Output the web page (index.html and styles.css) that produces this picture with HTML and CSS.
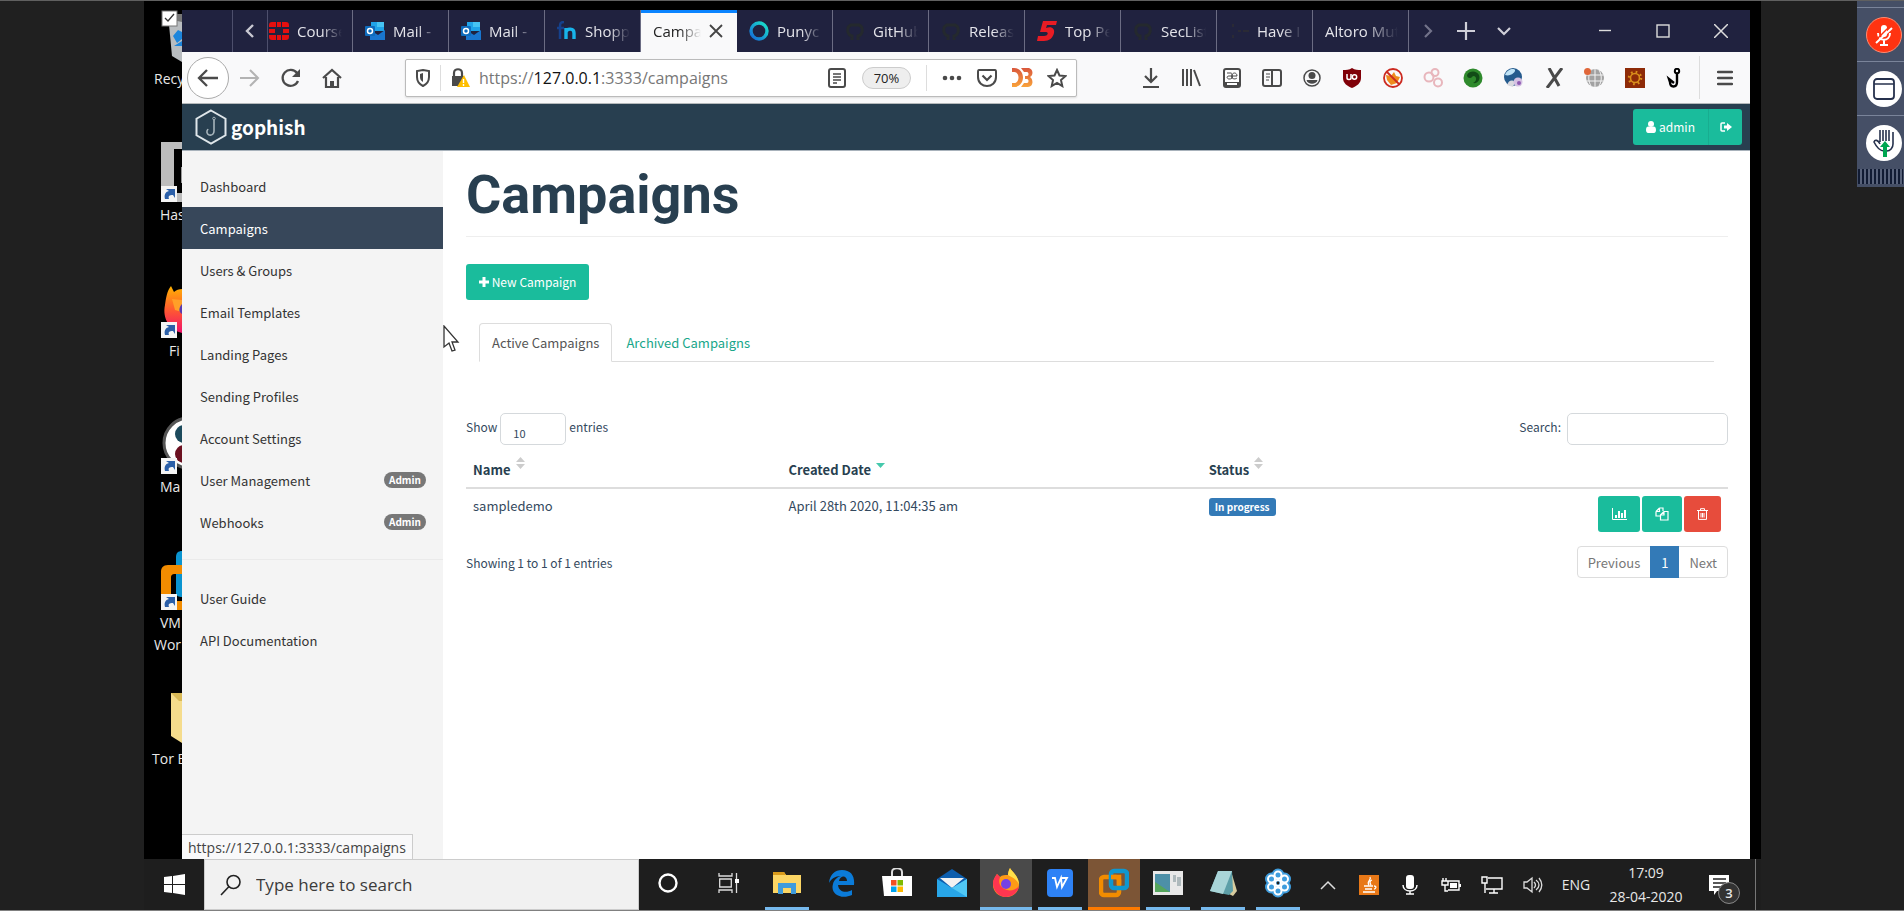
FILE: index.html
```html
<!DOCTYPE html>
<html lang="en">
<head>
<meta charset="utf-8">
<title>Campaigns - Gophish</title>
<link rel="stylesheet" href="styles.css">
</head>
<body>
<div class="viewer">
<div class="screen">
  <div class="workspace">
    <ul class="desktop">
      <li class="shortcut"><svg width="38" height="52" viewBox="0 0 38 52"><path d="M24 4h14v48l-10-6z" fill="#b9bdc0"/><path d="M24 4h14v8l-14-3z" fill="#777"/><path d="M29 26l5-6 4 2v7l-5 4zM30 36h8v-5z" fill="#1d86dc"/><rect x="18" y="1" width="15" height="15" fill="#fff" stroke="#777"/><path d="M21 8l3 3 6-7" fill="none" stroke="#333" stroke-width="1.3"/></svg><span class="label label-a">Recy</span></li>
      <li class="shortcut"><svg width="38" height="60" viewBox="0 0 38 60"><path d="M17 0h21v7h-8v44h8v9H17z" fill="#bdbdbd"/><path d="M38 25v16" stroke="#999" stroke-width="2"/><rect x="17" y="44" width="16" height="16" fill="#f4f4f4"/><path d="M21 57c-1-4 0-7 4-8l-3-2h9v9l-2-3c-4 0-5 1-4 4z" fill="#2b5fa8"/></svg><span class="label label-b">Has</span></li>
      <li class="shortcut"><svg width="38" height="60" viewBox="0 0 38 60"><defs><linearGradient id="fxd" x2="0" y2="1"><stop stop-color="#ffb400"/><stop offset=".5" stop-color="#ff5b30"/><stop offset="1" stop-color="#f0106c"/></linearGradient></defs><path d="M27 8l3 6c2-2 5-3 8-3v44c-12-3-20-14-17-28 1-7 2-14 6-19z" fill="url(#fxd)"/><path d="M28 21l10 1v12l-7-2z" fill="#ffa028"/><path d="M38 26v10c-4-2-3-7 0-10z" fill="#5a3bb0"/><rect x="17" y="44" width="16" height="16" fill="#f4f4f4"/><path d="M21 57c-1-4 0-7 4-8l-3-2h9v9l-2-3c-4 0-5 1-4 4z" fill="#2b5fa8"/></svg><span class="label label-c">Fi</span></li>
      <li class="shortcut"><svg width="38" height="60" viewBox="0 0 38 60"><circle cx="45" cy="29" r="25" fill="#fff" stroke="#555" stroke-width="3"/><circle cx="40" cy="20" r="9" fill="#1c4a5c"/><circle cx="40" cy="40" r="9" fill="#6b1020"/><rect x="17" y="44" width="16" height="16" fill="#f4f4f4"/><path d="M21 57c-1-4 0-7 4-8l-3-2h9v9l-2-3c-4 0-5 1-4 4z" fill="#2b5fa8"/></svg><span class="label label-b">Ma</span></li>
      <li class="shortcut"><svg width="38" height="60" viewBox="0 0 38 60"><path d="M38 1c-4 0-6 2-6 6v36c0 3 3 4 6 4z" fill="#0a94d0"/><path d="M38 15H24c-5 0-7 3-7 7v38h21v-9H27V28c0-3 1-4 4-4h7z" fill="#f28c00"/><rect x="17" y="44" width="16" height="16" fill="#f4f4f4"/><path d="M21 57c-1-4 0-7 4-8l-3-2h9v9l-2-3c-4 0-5 1-4 4z" fill="#2b5fa8"/></svg><span class="label label-b">VM</span><span class="label label-a">Wor</span></li>
      <li class="shortcut"><svg width="38" height="60" viewBox="0 0 38 60"><path d="M27 7h11v50l-11-7z" fill="#f5dc8c"/><path d="M27 7h11v8h-3z" fill="#d9b956"/></svg><span class="label label-d">Tor B</span></li>
    </ul>

    <div class="browser">
      <div class="tabs">
        <span class="tab-lead"></span>
        <button class="tab-scroll" aria-label="Previous tabs"><svg width="10" height="16" viewBox="0 0 10 16"><path d="M8 2L2 8l6 6" fill="none" stroke="#c9c9d2" stroke-width="2.4"/></svg></button>
        <button class="tab tab-cut"><svg width="20" height="20" viewBox="0 0 20 20"><path d="M3 1h4v5H0V4c0-2 1-3 3-3zM8 1h4v5H8zM13 1h4c2 0 3 1 3 3v2h-7zM0 8h6v4H0zM14 8h6v4h-6zM0 14h7v5H3c-2 0-3-1-3-3zM8 14h4v5H8zM13 14h7v2c0 2-1 3-3 3h-4z" fill="#e60f0f"/></svg><span>Course</span></button>
        <button class="tab"><svg width="20" height="20" viewBox="0 0 20 20"><path d="M6 1h13v9H6z" fill="#1fa3e8"/><path d="M12 1h7v5h-7z" fill="#46c3f2"/><path d="M5 9l8 5 7-5v10H5z" fill="#1976cf"/><rect y="5" width="10" height="10" rx="1" fill="#0f6cbd"/><circle cx="5" cy="10" r="2.5" fill="none" stroke="#fff" stroke-width="1.5"/></svg><span>Mail -</span></button>
        <button class="tab"><svg width="20" height="20" viewBox="0 0 20 20"><path d="M6 1h13v9H6z" fill="#1fa3e8"/><path d="M12 1h7v5h-7z" fill="#46c3f2"/><path d="M5 9l8 5 7-5v10H5z" fill="#1976cf"/><rect y="5" width="10" height="10" rx="1" fill="#0f6cbd"/><circle cx="5" cy="10" r="2.5" fill="none" stroke="#fff" stroke-width="1.5"/></svg><span>Mail -</span></button>
        <button class="tab"><svg width="20" height="20" viewBox="0 0 20 20"><path d="M7 1C3 1 3 3 3 6v12M0 7h7" fill="none" stroke="#15418c" stroke-width="2.5"/><path d="M9 18V7M9 11c1-4 8-4 8 1v6" fill="none" stroke="#18b4ea" stroke-width="3.4"/></svg><span>Shopp</span></button>
        <button class="tab tab-active"><span>Campa</span><svg width="14" height="14" viewBox="0 0 14 14"><path d="M1 1l12 12M13 1L1 13" stroke="#444" stroke-width="1.8"/></svg></button>
        <button class="tab"><svg width="20" height="20" viewBox="0 0 20 20"><defs><linearGradient id="ring" x1="1" x2="0" y2="1"><stop stop-color="#19e6c8"/><stop offset="1" stop-color="#1568d8"/></linearGradient></defs><circle cx="10" cy="10" r="8" fill="none" stroke="url(#ring)" stroke-width="3.4"/></svg><span>Punyc</span></button>
        <button class="tab"><svg width="20" height="20" viewBox="0 0 20 20"><path d="M7 19v-4c-5-1-6-9-1-11h8c5 2 4 10-1 11v4" fill="none" stroke="#24292e" stroke-width="3"/></svg><span>GitHub</span></button>
        <button class="tab"><svg width="20" height="20" viewBox="0 0 20 20"><path d="M7 19v-4c-5-1-6-9-1-11h8c5 2 4 10-1 11v4" fill="none" stroke="#24292e" stroke-width="3"/></svg><span>Releas</span></button>
        <button class="tab"><svg width="20" height="20" viewBox="0 0 20 20"><path d="M6 0h14l-1 4h-9l-1 3c6-2 9 1 8 5-1 5-5 8-10 8H0l1-5h6c4 0 5-4 2-4H3z" fill="#e81c24"/></svg><span>Top Pe</span></button>
        <button class="tab"><svg width="20" height="20" viewBox="0 0 20 20"><path d="M7 19v-4c-5-1-6-9-1-11h8c5 2 4 10-1 11v4" fill="none" stroke="#24292e" stroke-width="3"/></svg><span>SecList</span></button>
        <button class="tab"><svg width="20" height="20" viewBox="0 0 20 20"><path d="M4 3v3M4 14v3M9 10h3M14 10h6" stroke="#2a2a35" stroke-width="2"/></svg><span>Have I</span></button>
        <button class="tab"><span>Altoro Mut</span></button>
        <div class="tab-tools">
          <button aria-label="Next tabs"><svg width="10" height="16" viewBox="0 0 10 16"><path d="M2 2l6 6-6 6" fill="none" stroke="#72738a" stroke-width="2.2"/></svg></button>
          <button aria-label="New tab"><svg width="18" height="18" viewBox="0 0 18 18"><path d="M9 0v18M0 9h18" stroke="#cfcfd8" stroke-width="2.2"/></svg></button>
          <button aria-label="List all tabs"><svg width="16" height="10" viewBox="0 0 16 10"><path d="M2 2l6 6 6-6" fill="none" stroke="#cfcfd8" stroke-width="2.2"/></svg></button>
        </div>
        <div class="window-tools">
          <button aria-label="Minimize"><svg width="14" height="14" viewBox="0 0 14 14"><path d="M1 6.500h12" stroke="#ddd" stroke-width="1.4"/></svg></button>
          <button aria-label="Maximize"><svg width="14" height="14" viewBox="0 0 14 14"><rect x="1" y="1" width="12" height="12" fill="none" stroke="#ddd" stroke-width="1.4"/></svg></button>
          <button aria-label="Close"><svg width="14" height="14" viewBox="0 0 14 14"><path d="M0 0l14 14M14 0L0 14" stroke="#ddd" stroke-width="1.5"/></svg></button>
        </div>
      </div>

      <div class="toolbar">
        <div class="nav-tools">
          <button class="back" aria-label="Back"><svg width="22" height="20" viewBox="0 0 22 20"><path d="M21 10H2M10 2l-8 8 8 8" fill="none" stroke="#4a4a4a" stroke-width="2.3"/></svg></button>
          <button aria-label="Forward"><svg width="20" height="18" viewBox="0 0 20 18"><path d="M0 9h18M10 1l8 8-8 8" fill="none" stroke="#b3b3b3" stroke-width="2"/></svg></button>
          <button aria-label="Reload"><svg width="20" height="20" viewBox="0 0 20 20"><path d="M16 5a8 8 0 1 0 1 8" fill="none" stroke="#4a4a4a" stroke-width="2.3"/><path d="M19 1v8h-8z" fill="#4a4a4a"/></svg></button>
          <button aria-label="Home"><svg width="20" height="20" viewBox="0 0 20 20"><path d="M1 10l9-8 9 8M4 9v10h12V9" fill="none" stroke="#4a4a4a" stroke-width="2.2"/><path d="M8 19v-6h4v6z" fill="#4a4a4a"/></svg></button>
        </div>
        <div class="url-box">
          <svg class="shield" width="16" height="18" viewBox="0 0 16 18"><path d="M8 1l6 1v6c0 4-2 7-6 9-4-2-6-5-6-9V2z" fill="none" stroke="#4a4a4a" stroke-width="2"/><path d="M8 4v9c-2-1-3-3-3-5V5z" fill="#4a4a4a"/></svg>
          <span class="divider"></span>
          <svg class="lock" width="18" height="20" viewBox="0 0 18 20"><path d="M2 9V5c0-5 8-5 8 0v4" fill="none" stroke="#4a4a4a" stroke-width="2.2"/><path d="M0 8h12v10H0z" fill="#4a4a4a"/><path d="M12 7l6 12H5z" fill="#ffbf00"/><path d="M11.500 11v4M11.500 16v2" stroke="#fff" stroke-width="1.4"/></svg>
          <div class="url" role="textbox" aria-label="Address">https://<b>127.0.0.1</b>:3333/campaigns</div>
          <button aria-label="Reader view"><svg width="18" height="20" viewBox="0 0 18 20"><rect x="1" y="1" width="16" height="18" rx="2" fill="none" stroke="#4a4a4a" stroke-width="2"/><path d="M5 6h8M5 9h8M5 12h8M5 15h4" stroke="#4a4a4a" stroke-width="1.300"/></svg></button>
          <button class="zoom">70%</button>
          <div class="url-tools">
            <button aria-label="Page actions"><svg width="20" height="6" viewBox="0 0 20 6"><circle cx="3" cy="3" r="2.300" fill="#4a4a4a"/><circle cx="10" cy="3" r="2.300" fill="#4a4a4a"/><circle cx="17" cy="3" r="2.300" fill="#4a4a4a"/></svg></button>
            <button aria-label="Save to Pocket"><svg width="20" height="18" viewBox="0 0 20 18"><path d="M2 1h16c1 0 1 1 1 2v5c0 12-18 12-18 0V3c0-1 0-2 1-2z" fill="none" stroke="#4a4a4a" stroke-width="2"/><path d="M5.500 6.500L10 11l4.500-4.500" fill="none" stroke="#4a4a4a" stroke-width="2.200"/></svg></button>
            <button aria-label="D3"><svg width="21" height="19" viewBox="0 0 21 19"><defs><linearGradient id="dthree" x2="0" y2="1"><stop stop-color="#d9573c"/><stop offset="1" stop-color="#f9a33b"/></linearGradient></defs><path d="M0 0h2c12 0 12 19 0 19H0v-4h2c6 0 6-11 0-11H0zM9 0h7c5 0 6 7 2 9 4 3 3 10-2 10H9l3-4h3c2 0 2-4 0-4h-2V8h2c2 0 2-4 0-4h-3z" fill="url(#dthree)"/></svg></button>
            <button aria-label="Bookmark this page"><svg width="20" height="20" viewBox="0 0 20 20"><path d="M10 2l2.500 5.500 6 .6-4.500 4 1.300 6L10 15l-5.300 3.100 1.300-6-4.500-4 6-.6z" fill="none" stroke="#4a4a4a" stroke-width="2"/></svg></button>
          </div>
        </div>
        <div class="addons">
          <button aria-label="Downloads"><svg width="20" height="20" viewBox="0 0 20 20"><path d="M10 0v13M4 8l6 6 6-6M2 19h16" fill="none" stroke="#4a4a4a" stroke-width="2.200"/></svg></button>
          <button aria-label="Library"><svg width="20" height="20" viewBox="0 0 20 20"><path d="M2 1v17M6 1v17M10 1v17M13 2l6 16" stroke="#4a4a4a" stroke-width="2"/></svg></button>
          <button aria-label="Dictionary"><svg width="18" height="20" viewBox="0 0 18 20"><rect x="1" y="1" width="16" height="18" rx="2" fill="#fff" stroke="#4a4a4a" stroke-width="2"/><path d="M1 14h16v5H1z" fill="#4a4a4a"/><path d="M4 15h10v2H4z" fill="#fff"/><path d="M4 5h4c1 0 1 1 1 6M9 8H6c-3 0-2 3 0 3 3 0 3-1 3-3 0-4 5-4 5 0H9c0 4 4 3 5 2" fill="none" stroke="#4a4a4a"/></svg></button>
          <button aria-label="Sidebars"><svg width="20" height="18" viewBox="0 0 20 18"><rect x="1" y="1" width="18" height="16" rx="2" fill="none" stroke="#4a4a4a" stroke-width="2"/><path d="M10 1v16" stroke="#4a4a4a" stroke-width="2"/><path d="M4 5h4M4 8h4M4 11h3" stroke="#4a4a4a"/></svg></button>
          <button aria-label="Account"><svg width="18" height="18" viewBox="0 0 18 18"><circle cx="9" cy="9" r="8" fill="none" stroke="#4a4a4a" stroke-width="1.500"/><circle cx="9" cy="6.500" r="3.500" fill="#4a4a4a"/><path d="M3.500 11h11c-1 5-10 5-11 0z" fill="#4a4a4a"/></svg></button>
          <button aria-label="uBlock Origin"><svg width="18" height="20" viewBox="0 0 18 20"><path d="M9 0c3 2 6 2 9 2v8c0 5-4 8-9 10-5-2-9-5-9-10V2c3 0 6 0 9-2z" fill="#800008"/><path d="M4 6v4c0 2 4 2 4 0V6" fill="none" stroke="#fff" stroke-width="1.500"/><circle cx="11.500" cy="9" r="2.200" fill="none" stroke="#fff" stroke-width="1.500"/></svg></button>
          <button aria-label="FoxyProxy"><svg width="20" height="20" viewBox="0 0 20 20"><path d="M3 7l5 1 3-4 2 4 4 1-3 6-6 2-4-5z" fill="#ef8b1e"/><circle cx="10" cy="10" r="9" fill="none" stroke="#cc2a20" stroke-width="1.800"/><path d="M4 4l12 12" stroke="#cc2a20" stroke-width="1.800"/></svg></button>
          <button aria-label="Circles"><svg width="20" height="20" viewBox="0 0 20 20"><g fill="none" stroke="#e8b6bc" stroke-width="2"><circle cx="6" cy="9" r="4.500"/><circle cx="12" cy="4.500" r="3.500"/><circle cx="15" cy="14.500" r="4"/></g></svg></button>
          <button aria-label="Green globe"><svg width="20" height="20" viewBox="0 0 20 20"><circle cx="10" cy="10" r="9.500" fill="#2f8a2c"/><path d="M4 7c3-5 10-4 12 0 2 5-2 9-6 8 4-2 4-6 1-7-2 0-2 2-4 2s-3-1-3-3z" fill="#124c17"/></svg></button>
          <button aria-label="Globe"><svg width="20" height="20" viewBox="0 0 20 20"><circle cx="9" cy="9" r="9" fill="#255b8d"/><path d="M1 7c2-6 9-7 10-5s-5 7-10 5z" fill="#bfe2f5"/><path d="M3 17c2-6 6-5 8-3l-2 5z" fill="#d9d9df"/><circle cx="14" cy="14" r="4.500" fill="#d5c2e2"/><circle cx="15" cy="15" r="2" fill="#8f5bb3"/></svg></button>
          <button aria-label="XPath"><svg width="18" height="20" viewBox="0 0 18 20"><path d="M4 0l10 18M17 0L2 20" stroke="#4a4a4a" stroke-width="3"/></svg></button>
          <button aria-label="Network"><svg width="20" height="20" viewBox="0 0 20 20"><circle cx="11" cy="10" r="9" fill="#a2a2a2"/><path d="M2 7h18M2 13h18M11 1v18M7 2c-3 5-3 11 0 16M15 2c3 5 3 11 0 16" fill="none" stroke="#f4f4f4"/><circle cx="3.500" cy="3.500" r="3.500" fill="#e0673a"/></svg></button>
          <button aria-label="Gear"><svg width="20" height="20" viewBox="0 0 20 20"><path d="M0 0h20v20H0z" fill="#8e2b08"/><circle cx="10" cy="10" r="6" fill="none" stroke="#d98f1c" stroke-width="2.500" stroke-dasharray="1.700 3"/><circle cx="10" cy="10" r="4.500" fill="none" stroke="#d98f1c" stroke-width="1.600"/></svg></button>
          <button aria-label="Hook"><svg width="18" height="20" viewBox="0 0 18 20"><circle cx="11" cy="3" r="2.200" fill="none" stroke="#000" stroke-width="2"/><path d="M11 5v9c0 6-7 6-7 0l-1-3 5 4" fill="none" stroke="#000" stroke-width="2.400"/></svg></button>
        </div>
        <button class="menu" aria-label="Menu"><svg width="16" height="16" viewBox="0 0 16 16"><path d="M1 2h14M1 8h14M1 14h14" stroke="#4a4a4a" stroke-width="2.300" stroke-linecap="round"/></svg></button>
      </div>

      <header class="site-header">
        <a class="brand" href="#"><svg width="32" height="36" viewBox="0 0 32 36"><path d="M16 1.500l14.500 8.250v16.500L16 34.500 1.500 26.250V9.750z" fill="none" stroke="#dfe6ea" stroke-width="2"/><path d="M19 11v11c0 6-8 5-7 0l1-2" fill="none" stroke="#a7b4bb" stroke-width="1.600"/><circle cx="19" cy="9.500" r="1.300" fill="none" stroke="#a7b4bb"/></svg>gophish</a>
        <div class="user-tools">
          <button class="btn user"><svg width="10" height="12" viewBox="0 0 10 12"><circle cx="5" cy="3" r="3" fill="#fff"/><path d="M0 9c0-4 2-4 5-3 3-1 5-1 5 3 0 2-1 3-2 3H2c-1 0-2-1-2-3z" fill="#fff"/></svg>admin</button>
          <button class="btn logout" aria-label="Log out"><svg width="12" height="10" viewBox="0 0 12 10"><path d="M5 1H2C1 1 1 2 1 2v6c0 1 1 1 1 1h3" fill="none" stroke="#fff" stroke-width="1.500"/><path d="M4 3.500h3V1l5 4-5 4V6.500H4z" fill="#fff"/></svg></button>
        </div>
      </header>

      <div class="page">
        <nav class="sidebar">
          <a href="#">Dashboard</a>
          <a href="#" class="current">Campaigns</a>
          <a href="#">Users &amp; Groups</a>
          <a href="#">Email Templates</a>
          <a href="#">Landing Pages</a>
          <a href="#">Sending Profiles</a>
          <a href="#">Account Settings</a>
          <a href="#">User Management<span class="badge">Admin</span></a>
          <a href="#">Webhooks<span class="badge">Admin</span></a>
          <hr>
          <a href="#">User Guide</a>
          <a href="#">API Documentation</a>
        </nav>
        <main class="content">
          <h1>Campaigns</h1>
          <button class="btn new"><svg width="10" height="10" viewBox="0 0 10 10"><path d="M5 0v10M0 5h10" stroke="#fff" stroke-width="3"/></svg>New Campaign</button>
          <div class="pills">
            <button class="pill pill-on">Active Campaigns</button>
            <button class="pill">Archived Campaigns</button>
          </div>
          <div class="filters">
            <label>Show <select><option>10</option></select> entries</label>
            <label>Search: <input type="search"></label>
          </div>
          <table>
            <colgroup><col class="c-name"><col class="c-date"><col class="c-status"><col></colgroup>
            <thead><tr>
              <th>Name<svg class="sort" width="9" height="12" viewBox="0 0 9 12"><path d="M0 5l4.500-5L9 5zM0 7h9l-4.500 5z" fill="#ccc"/></svg></th>
              <th>Created Date<svg class="sort" width="9" height="12" viewBox="0 0 9 12"><path d="M0 6h9l-4.500 5z" fill="#45c9ac"/></svg></th>
              <th>Status<svg class="sort" width="9" height="12" viewBox="0 0 9 12"><path d="M0 5l4.500-5L9 5zM0 7h9l-4.500 5z" fill="#ccc"/></svg></th>
              <th></th>
            </tr></thead>
            <tbody><tr>
              <td>sampledemo</td>
              <td>April 28th 2020, 11:04:35 am</td>
              <td><span class="status">In progress</span></td>
              <td><div class="actions">
                <button class="btn stats" aria-label="View results"><svg width="15" height="12" viewBox="0 0 15 12"><path d="M.5 0v11.500H15" fill="none" stroke="#fff"/><path d="M4 10V7M7 10V3M10 10V5M13 10V2" stroke="#fff" stroke-width="2"/></svg></button>
                <button class="btn copy" aria-label="Copy"><svg width="14" height="14" viewBox="0 0 14 14"><path d="M4.500 1H8v3M1 4.500L4.500 1M4.500 1v3.500H1M1 4.500V9h4M9 4.500L5.500 8M9 4.500h4V13H5.500V8H9V4.500" fill="none" stroke="#fff" stroke-width="1.200"/></svg></button>
                <button class="btn delete" aria-label="Delete"><svg width="11" height="12" viewBox="0 0 11 12"><path d="M0 2.500h11M3.500 2V.7h4V2M1.500 3v8.400h8V3M4 5v4.500M5.500 5v4.500M7 5v4.500" fill="none" stroke="#fff"/></svg></button>
              </div></td>
            </tr></tbody>
          </table>
          <div class="table-foot">
            <span>Showing 1 to 1 of 1 entries</span>
            <div class="pager"><button>Previous</button><button class="on">1</button><button>Next</button></div>
          </div>
        </main>
      </div>
      <div class="status-bubble">https://127.0.0.1:3333/campaigns</div>
      <svg class="cursor" width="17" height="28" viewBox="0 0 17 28"><path d="M1 1v21l5-4 3 8 3-1-3-8h6z" fill="#fff" stroke="#333" stroke-width="1.300"/></svg>
    </div>
  </div>

  <div class="taskbar">
    <button class="start" aria-label="Start"><svg width="21" height="21" viewBox="0 0 21 21"><path d="M0 3l8-1v8H0zM9 2l12-2v10H9zM0 11h8v8l-8-1zM9 11h12v10L9 19z" fill="#fff"/></svg></button>
    <label class="find"><svg width="22" height="22" viewBox="0 0 22 22"><circle cx="13.500" cy="8" r="6.500" fill="none" stroke="#222" stroke-width="1.600"/><path d="M9 12.500L1 21" stroke="#222" stroke-width="1.600"/></svg><input type="text" placeholder="Type here to search" aria-label="Type here to search"></label>
    <div class="apps">
      <button aria-label="Cortana"><svg width="20" height="20" viewBox="0 0 20 20"><circle cx="10" cy="10" r="8.500" fill="none" stroke="#fff" stroke-width="2.400"/></svg></button>
      <button aria-label="Task view"><svg width="22" height="22" viewBox="0 0 22 22"><path d="M1 1v3h13V1M1 21v-3h13v3M1.700 7h11.600v8H1.700zM18.500 1v20" fill="none" stroke="#ddd" stroke-width="1.300"/><path d="M17 7h4v4h-4z" fill="#fff"/></svg></button>
      <button class="open" aria-label="File Explorer"><svg width="28" height="24" viewBox="0 0 28 24"><path d="M0 1h11l2 3h15v18H0z" fill="#fbd564"/><path d="M0 1h11l2 3H0z" fill="#d99b1c"/><path d="M5 12h18v11h-5v-6h-8v6H5z" fill="#3e9bdc"/></svg></button>
      <button aria-label="Edge"><svg width="26" height="28" viewBox="0 0 26 28"><path d="M0 14C1 5 6 1 13 1c9 0 13 6 12 15H9c1 8 9 8 14 5v5C12 31 1 25 4 15c1-4 4-7 8-8C6 7 2 10 0 14zm10-2h8c0-6-7-6-8 0z" fill="#0b7bd8"/></svg></button>
      <button aria-label="Store"><svg width="30" height="30" viewBox="0 0 30 30"><path d="M10 9V4c0-5 10-5 10 0v5" fill="none" stroke="#ddd" stroke-width="2"/><path d="M0 8h30v20H2z" fill="#fff"/><path d="M9 12h5.500v5.500H9z" fill="#f25022"/><path d="M15.500 12H21v5.500h-5.500z" fill="#7fba00"/><path d="M9 18.500h5.500V24H9z" fill="#00a4ef"/><path d="M15.500 18.500H21V24h-5.500z" fill="#ffb900"/></svg></button>
      <button aria-label="Mail"><svg width="30" height="28" viewBox="0 0 30 28"><path d="M0 10L15 0l15 10v18H0z" fill="#0d5ead"/><path d="M3 9h24L15 19z" fill="#f2f2f2"/><path d="M0 10l15 9 15-9v18H0z" fill="#28a6e8"/><path d="M30 10v18L15 19z" fill="#50c8f5"/></svg></button>
      <button class="open front" aria-label="Firefox"><svg width="28" height="30" viewBox="0 0 28 30"><path d="M5 6l3 3c2-2 5-2 8-2 0-3 1-5 2-7 2 4 9 8 9 17 0 7-6 12-13 12S1 24 1 17C1 12 3 9 5 6z" fill="#ff9a16"/><path d="M1 15c0 8 6 14 13 14s12-5 13-11c-4 6-15 6-19-1-2-4 0-7 0-8L5 6c-2 3-4 5-4 9z" fill="#ff3650"/><path d="M18 0c2 4 9 8 9 17-2-6-6-7-11-10 0-3 1-5 2-7z" fill="#ffe04a"/><circle cx="14" cy="16" r="5" fill="#7542e5"/></svg></button>
      <button class="open" aria-label="WPS Writer"><svg width="26" height="28" viewBox="0 0 26 28"><rect width="26" height="28" rx="4" fill="#2e82f6"/><path d="M5 9h3l2 9 4-9 1 9 5-9h-6" fill="none" stroke="#fff" stroke-width="1.800"/></svg></button>
      <button class="open vm" aria-label="VMware"><svg width="30" height="30" viewBox="0 0 30 30"><rect x="2" y="9" width="18" height="18" rx="3" fill="none" stroke="#f28c00" stroke-width="4.500"/><rect x="12" y="3" width="16" height="17" rx="3" fill="none" stroke="#1097cf" stroke-width="4.500"/><path d="M12 9h8v8" fill="none" stroke="#f28c00" stroke-width="4.500"/></svg></button>
      <button class="open" aria-label="Virtual machine"><svg width="30" height="24" viewBox="0 0 30 24"><path d="M0 0h30v24H0z" fill="#e8e8e8"/><path d="M2 3h15v18H2z" fill="#4d90a8"/><path d="M2 21V11l15 10z" fill="#55a55d"/><path d="M20 4h3v7h-3zM24 6h4v9h-4z" fill="#aeb9bc"/></svg></button>
      <button class="open" aria-label="Notes"><svg width="28" height="26" viewBox="0 0 28 26"><path d="M22 1l6 20-4 5-6-3z" fill="#d8cc9f"/><path d="M9 1h14l1 20-4 4-19-4z" fill="#5d9fa8"/><path d="M9 1h14l-9 23-13-3z" fill="#a9d5d8"/></svg></button>
      <button class="open" aria-label="Meeting"><svg width="28" height="30" viewBox="0 0 28 30"><g fill="#3f9ddd" stroke="#3f9ddd" stroke-width="6"><circle cx="14" cy="7" r="3.500"/><circle cx="20.500" cy="11" r="3.500"/><circle cx="20.500" cy="19" r="3.500"/><circle cx="14" cy="23" r="3.500"/><circle cx="7.500" cy="19" r="3.500"/><circle cx="7.500" cy="11" r="3.500"/></g><g fill="none" stroke="#fff" stroke-width="2"><circle cx="14" cy="7" r="3.500"/><circle cx="20.500" cy="11" r="3.500"/><circle cx="20.500" cy="19" r="3.500"/><circle cx="14" cy="23" r="3.500"/><circle cx="7.500" cy="19" r="3.500"/><circle cx="7.500" cy="11" r="3.500"/><circle cx="14" cy="15" r="3"/></g></svg></button>
    </div>
    <div class="tray">
      <button aria-label="Hidden icons"><svg width="16" height="10" viewBox="0 0 16 10"><path d="M1 9l7-7 7 7" fill="none" stroke="#ddd" stroke-width="1.500"/></svg></button>
      <button aria-label="Java"><svg width="20" height="20" viewBox="0 0 20 20"><path d="M0 0h20v20H0z" fill="#e87817"/><path d="M11 2c2 3-4 4-1 8M13 5c-3 1-2 3-1 5M5 11h9M6 14h7M4 17h12M15 11c3 0 2 3 0 3" fill="none" stroke="#fff" stroke-width="1.300"/></svg></button>
      <button aria-label="Microphone"><svg width="16" height="20" viewBox="0 0 16 20"><rect x="4" width="8" height="14" rx="3" fill="#fff"/><path d="M1 10c0 8 14 8 14 0M8 16v3M4 19h8" fill="none" stroke="#fff" stroke-width="1.500"/></svg></button>
      <button aria-label="Battery"><svg width="20" height="16" viewBox="0 0 20 16"><path d="M6 4h12v9H7M1 4h6v4H1zM2 4V1M5 4V1M4 8v6h3" fill="none" stroke="#fff" stroke-width="1.400"/><path d="M9 6h7v5H9zM18 7h2v3h-2z" fill="#fff"/></svg></button>
      <button aria-label="Network"><svg width="22" height="18" viewBox="0 0 22 18"><path d="M7 2h14v11H5M13 13v4M8 17h9M1 1h5v6H1zM4 7v10" fill="none" stroke="#fff" stroke-width="1.400"/></svg></button>
      <button aria-label="Volume"><svg width="20" height="18" viewBox="0 0 20 18"><path d="M1 6h3l5-4v14l-5-4H1zM11 6c2 2 2 4 0 6M13 4c4 3 4 7 0 10M16 2c4 5 4 9 0 14" fill="none" stroke="#ddd" stroke-width="1.300"/></svg></button>
      <button class="lang">ENG</button>
      <div class="clock"><span>17:09</span><span>28-04-2020</span></div>
      <button class="notes" aria-label="3 notifications"><svg width="22" height="20" viewBox="0 0 22 20"><path d="M0 0h20v16H8l-3 4v-4H0z" fill="#fff"/><path d="M4 4h13M4 8h13M4 12h9" stroke="#222" stroke-width="1.500"/></svg><span class="count">3</span></button>
    </div>
  </div>
</div>

<aside class="side-panel">
  <div class="control"><button class="muted" aria-label="Unmute"><svg width="24" height="24" viewBox="0 0 24 24"><rect x="9" y="2" width="6" height="12" rx="3" fill="#fff"/><path d="M6 10c0 9 12 9 12 0M12 17v4M8 22h8M4 20L20 5" fill="none" stroke="#fff" stroke-width="2"/><path d="M3 18L18 3" stroke="#ff3311" stroke-width="1.500"/></svg></button></div>
  <div class="control"><button aria-label="View"><svg width="22" height="22" viewBox="0 0 22 22"><rect x="1" y="1" width="20" height="20" rx="3" fill="none" stroke="#26314d" stroke-width="1.800"/><path d="M1 6h20" stroke="#26314d" stroke-width="1.500"/></svg></button></div>
  <div class="control"><button aria-label="Raise hand"><svg width="24" height="32" viewBox="0 0 24 32"><path d="M8 3v12M11 3v11M14 3v11M17 3v11M21 5v12c0 4-3 7-6 7h-3c-5 0-9-7-10-9 1-3 4-2 6 2" fill="none" stroke="#26314d" stroke-width="1.600"/><path d="M13 14l5 6h-3v10h-4V20H8z" fill="#00a651"/></svg></button></div>
  <div class="grip"></div>
</aside>
</div>
</body>
</html>
```
FILE: styles.css
```css
* { box-sizing: border-box; }
body {
  margin: 0;
  background: #202020;
  font-family: "Noto Sans CJK SC", "Open Sans", sans-serif;
  font-size: 13px;
  color: #34495e;
}
button {
  margin: 0;
  padding: 0;
  border: 0;
  background: none;
  font: inherit;
  color: inherit;
  display: flex;
  align-items: center;
  justify-content: center;
}
svg { flex: none; display: block; }
a { color: inherit; text-decoration: none; }

.viewer {
  display: grid;
  grid-template-columns: 144px minmax(0, 1fr) 96px 47px;
  min-height: 100vh;
  border-top: 1px solid #606060;
  border-bottom: 1px solid #808080;
}
.screen {
  grid-column: 2;
  display: flex;
  flex-direction: column;
  background: #000;
}
.workspace {
  flex: 1;
  display: grid;
  grid-template-columns: 38px minmax(0, 1fr);
  padding-right: 11px;
}

/* Desktop behind the window */
.desktop { margin: 0; padding: 5px 0 0; list-style: none; overflow: hidden; }
.shortcut { height: 136px; }
.shortcut svg { height: 60px; }
.label {
  display: block;
  white-space: nowrap;
  font: 14px/22px "Open Sans", sans-serif;
  color: #e8e8e8;
}
.label-a { padding-left: 10px; }
.label-b { padding-left: 16px; }
.label-c { padding-left: 25px; }
.label-d { padding-left: 8px; }
.shortcut svg + .label { margin-top: 2px; }

/* Browser chrome */
.browser {
  position: relative;
  display: flex;
  flex-direction: column;
  margin-top: 9px;
  background: #fff;
}
.tabs {
  display: flex;
  height: 42px;
  background: #20223f;
  color: #e4e4ea;
  font: 15px "Open Sans", sans-serif;
}
.tab-lead { width: 50px; }
.tab-scroll { width: 36px; border-left: 1px solid #4d4f6c; border-right: 1px solid #4d4f6c; }
.tab {
  width: 96px;
  flex: none;
  justify-content: flex-start;
  gap: 8px;
  padding: 0 10px 0 12px;
  border-right: 1px solid #6b6c83;
}
.tab span {
  flex: 1;
  text-align: left;
  overflow: hidden;
  white-space: nowrap;
  mask-image: linear-gradient(90deg, #000 55%, transparent);
}
.tab-cut { width: 85px; padding-left: 1px; }
.tab-active {
  background: #f9f9fa;
  color: #222;
  border-right: 0;
  border-top: 3px solid #0a84ff;
  padding-bottom: 3px;
  padding-right: 14px;
}
.tab-tools { display: flex; width: 116px; }
.tab-tools button { width: 38px; }
.window-tools { display: flex; margin-left: auto; }
.window-tools button { width: 58px; }

.toolbar {
  display: flex;
  align-items: center;
  height: 52px;
  background: #f9f9fa;
  border-bottom: 1px solid #b5b9bb;
}
.nav-tools { display: flex; align-items: center; padding-left: 5px; margin-right: 53px; }
.nav-tools button { width: 41px; }
.nav-tools .back { width: 42px; height: 42px; border: 1px solid #aaa; border-radius: 50%; background: #fff; }
.url-box {
  display: flex;
  align-items: center;
  flex: 668 1 0;
  height: 38px;
  padding-left: 9px;
  background: #fff;
  border: 1px solid #bbb;
  border-radius: 2px;
  box-shadow: 0 1px 2px #ddd;
}
.divider { width: 1px; height: 26px; margin: 0 11px 0 9px; background: #ddd; }
.lock { margin-right: 9px; }
.url {
  flex: 1;
  font: 16px "Open Sans", sans-serif;
  color: #777;
}
.url b { font-weight: 400; color: #111; }
.zoom {
  width: 49px;
  height: 22px;
  margin: 0 15px 0 16px;
  border: 1px solid #ccc;
  border-radius: 11px;
  background: #eee;
  color: #222;
  font: 13px "Open Sans", sans-serif;
}
.url-tools { display: flex; height: 26px; padding: 0 1px 0 8px; border-left: 1px solid #ddd; }
.url-tools button { width: 35px; }
.addons { display: flex; flex: 570 1 0; justify-content: space-between; margin-left: 54px; }
.addons button { width: 40px; height: 26px; flex: none; }
.menu { width: 51px; height: 43px; margin-left: 4px; border-left: 1px solid #ddd; flex: none; }

/* Application header */
.site-header {
  display: flex;
  justify-content: space-between;
  align-items: center;
  height: 47px;
  padding: 0 8px 0 13px;
  background: #283f50;
  border-bottom: 1px solid #a8b2bb;
}
.brand { display: flex; align-items: center; gap: 4px; color: #fff; font-size: 19px; line-height: 36px; font-weight: 700; }
.user-tools { display: flex; }
.btn { background: #1abc9c; color: #fff; height: 36px; border-radius: 3px; gap: 3px; font-size: 12px; line-height: 20px; }
.user { width: 75px; border-radius: 3px 0 0 3px; }
.logout { width: 34px; border-left: 1px solid #18ad90; border-radius: 0 3px 3px 0; }

/* Page body */
.page { flex: 1; display: grid; grid-template-columns: 261px minmax(0, 1fr); }
.sidebar { padding-top: 14px; background: #f4f4f4; color: #333; }
.sidebar a {
  display: flex;
  justify-content: space-between;
  align-items: center;
  height: 42px;
  padding: 0 17px 0 18px;
}
.sidebar .current { background: #37475a; color: #fff; }
.sidebar hr { margin: 16px 0 17px; border: 0; border-top: 1px solid #eaeaea; }
.badge {
  width: 42px;
  border-radius: 8px;
  background: #777;
  color: #fff;
  font-size: 10px;
  line-height: 16px;
  font-weight: 700;
  text-align: center;
}
.content { padding: 0 22px 24px 23px; }
h1 {
  margin: 0 0 27px;
  padding: 14px 0 11px;
  border-bottom: 1px solid #eee;
  font: 700 54px/60px Roboto, sans-serif;
  color: #283f50;
}
.new { width: 123px; }
.pills { display: flex; margin: 23px 14px 51px 13px; border-bottom: 1px solid #ddd; }
.pill { height: 38px; padding: 0 14px; color: #18a689; }
.pill-on {
  height: 39px;
  margin-bottom: -1px;
  padding: 0 12px;
  border: 1px solid #ddd;
  border-bottom-color: #fff;
  border-radius: 4px 4px 0 0;
  background: #fff;
  color: #555;
}
.filters { display: flex; justify-content: space-between; }
.filters label { display: flex; gap: 3px; height: 32px; font-size: 12px; line-height: 28px; }
.filters select, .filters input {
  border: 1px solid #d5d9dc;
  border-radius: 5px;
  background: #fff;
  color: #34495e;
  font: inherit;
}
.filters select { appearance: none; width: 66px; height: 32px; padding: 8px 12px 0; font-size: 11px; line-height: 20px; }
.filters input { width: 161px; height: 32px; margin-left: 3px; }
table { width: 100%; table-layout: fixed; border-collapse: collapse; }
.c-name { width: 25%; }
.c-date { width: 33.3%; }
.c-status { width: 27%; }
th {
  height: 43px;
  padding: 4px 7px 0;
  border-bottom: 2px solid #ddd;
  text-align: left;
  line-height: 18px;
  color: #283f50;
}
.sort { display: inline-block; margin: 0 0 6px 5px; }
td { padding: 7px 7px 7px; vertical-align: top; line-height: 20px; }
.status {
  display: inline-block;
  margin-top: 2px;
  padding: 0 6px;
  border-radius: 3px;
  background: #337ab7;
  color: #fff;
  font-size: 10px;
  font-weight: 700;
  line-height: 18px;
}
.actions { display: flex; justify-content: flex-end; gap: 2px; }
.stats { width: 42px; }
.copy { width: 40px; }
.delete { width: 37px; background: #e74c3c; }
.table-foot { display: flex; justify-content: space-between; align-items: center; margin-top: 7px; font-size: 12px; }
.pager { display: flex; height: 32px; border: 1px solid #ddd; border-radius: 4px; color: #777; font-size: 13px; }
.pager button { padding: 0 10px; }
.pager .on { margin: -1px 0; padding: 0 11px; background: #337ab7; color: #fff; }

/* Overlays */
.status-bubble {
  position: absolute;
  left: 0;
  bottom: 0;
  padding: 2px 6px 0;
  border: 1px solid #ccc;
  border-width: 1px 1px 0 0;
  background: #f9f9fa;
  color: #444;
  font: 14px/22px "Open Sans", sans-serif;
}
.cursor { position: absolute; left: 261px; top: 315px; }

/* Taskbar */
.taskbar {
  display: flex;
  height: 51px;
  background: #1e1e1e;
  color: #e8e8e8;
  font-family: "Open Sans", sans-serif;
}
.start { width: 60px; }
.find {
  display: flex;
  align-items: center;
  gap: 12px;
  width: 435px;
  padding-left: 15px;
  border: 1px solid #ccc;
  background: #f1f1f1;
}
.find input { flex: 1; border: 0; background: none; font: 17px "Open Sans", sans-serif; }
.find input::placeholder { color: #3b3b3b; opacity: 1; }
.apps { display: flex; gap: 11px; margin-left: 4px; }
.apps button { width: 44px; border-bottom: 3px solid transparent; }
.apps button:nth-child(-n+2) { width: 50px; }
.apps .open { border-color: #76b9ed; }
.apps .front, .apps .vm { width: 52px; margin: 0 -5px; }
.apps .front { background: #4a4a4a; }
.apps .vm { background: #7c5536; border-color: #ff7a00; }
.tray { display: flex; margin-left: auto; border-right: 1px solid #777; margin-right: 5px; }
.tray button { width: 41px; }
.tray .lang { width: 46px; font-size: 14px; }
.clock {
  display: flex;
  flex-direction: column;
  align-items: center;
  justify-content: center;
  width: 94px;
  font-size: 14px;
  line-height: 24px;
}
.tray .notes { position: relative; width: 62px; justify-content: flex-start; padding-left: 16px; }
.count {
  position: absolute;
  left: 25px;
  top: 23px;
  width: 22px;
  border: 1px solid #888;
  border-radius: 50%;
  background: #333;
  font-size: 13px;
  line-height: 20px;
  font-weight: 600;
}

/* Meeting controls */
.side-panel {
  grid-column: 4;
  align-self: start;
  padding: 6px 0 3px;
  background: #454f66;
}
.control { display: flex; height: 54px; align-items: center; padding-left: 9px; border-top: 1px solid #7a849a; }
.control button {
  width: 36px;
  height: 36px;
  border-radius: 50%;
  background: #fff;
}
.control .muted { background: #ff3311; border: 1px solid #ff8a70; }
.grip { height: 15px; margin: 0 1px; background: repeating-linear-gradient(90deg, #111b33 0 2px, #59637b 2px 4px); }
```
